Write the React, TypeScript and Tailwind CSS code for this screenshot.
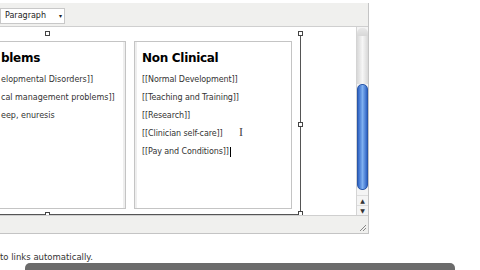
import React from "react"

const FONT = { fontFamily: '"DejaVu Sans", Verdana, sans-serif' }

const Handle = ({ className }: { className: string }) => (
    <span className={`absolute w-[5px] h-[5px] bg-white border border-[#444] ${className}`} />
)

const Scrollbar = () => (
    <div className="w-[12px] flex flex-col border-l border-[#d4d4d4] bg-[#f4f4f4]">
        {/* top cap */}
        <div className="h-[8px] bg-gradient-to-b from-[#e8e8e8] to-[#d8d8d8] rounded-t-[5px] mt-[1px]" />
        {/* track above thumb */}
        <div className="h-[48px] bg-gradient-to-r from-[#d8d8d8] via-[#f6f6f6] to-[#d8d8d8]" />
        {/* thumb */}
        <div className="h-[106px] rounded-[5px] bg-gradient-to-r from-[#2f63c4] via-[#7fb0f0] to-[#2f63c4] border border-[#2a57a8]" />
        <div className="flex-1" />
        <div className="h-[10px] flex items-center justify-center border-t border-[#ddd] text-[6px] text-[#333] leading-none">▲</div>
        <div className="h-[10px] flex items-center justify-center border-t border-[#ddd] text-[6px] text-[#333] leading-none">▼</div>
    </div>
)

export default function App() {
    return (
        <div className="w-[480px] h-[270px] bg-white overflow-hidden relative" style={FONT}>
            <div className="w-[369px] mt-[3px] flex flex-col border-r border-b border-[#c4c4c4]">
                {/* Toolbar */}
                <div className="h-[24px] bg-[#f0f0ee] border-b border-[#cfcfcf] flex items-center">
                    <div className="w-[65px] h-[16px] mt-[3px] bg-white border border-[#c8c8c8] flex items-center justify-between pl-[4px] pr-[2px]">
                        <span className="text-[8px] text-[#222]">Paragraph</span>
                        <span className="text-[6px] text-[#222] leading-none">▾</span>
                    </div>
                </div>

                {/* Editor */}
                <div className="h-[188px] flex">
                    <div className="flex-1 relative bg-white">
                        {/* table selection */}
                        <div className="absolute left-[-200px] top-[6px] w-[501px] h-[182px] border-r border-b border-[#555]" />
                        <Handle className="left-[45px] top-[4px]" />
                        <Handle className="left-[298px] top-[4px]" />
                        <Handle className="left-[298px] top-[95px]" />
                        <Handle className="left-[298px] top-[184px]" />
                        <Handle className="left-[45px] top-[185px]" />

                        <div className="flex gap-[8px] ml-[-10px] mt-[14px] h-[168px]">
                            {/* left cell */}
                            <div className="w-[136px] border border-[#c4c4c4] shadow-[inset_-2px_0_0_#eeeeee] pl-[10px]">
                                <div className="text-[12px] font-bold text-black mt-[10px] leading-none tracking-[-0.3px]">blems</div>
                                <div className="text-[8px] text-[#333] mt-[7px] leading-[18px]">
                                    <div>elopmental Disorders]]</div>
                                    <div>cal management problems]]</div>
                                    <div>eep, enuresis</div>
                                </div>
                            </div>
                            {/* right cell */}
                            <div className="w-[158px] border border-[#c4c4c4] shadow-[inset_2px_0_0_#eeeeee] pl-[7px] relative">
                                <div className="text-[12px] font-bold text-black mt-[10px] leading-none tracking-[-0.3px]">Non Clinical</div>
                                <div className="text-[8px] text-[#333] mt-[7px] leading-[18px] tracking-[-0.1px]">
                                    <div>[[Normal Development]]</div>
                                    <div>[[Teaching and Training]]</div>
                                    <div>[[Research]]</div>
                                    <div>[[Clinician self-care]]</div>
                                    <div className="flex items-center">
                                        [[Pay and Conditions]]
                                        <span className="inline-block w-px h-[10px] bg-black ml-[1px]" />
                                    </div>
                                </div>
                                {/* I-beam cursor */}
                                <span
                                    className="absolute left-[104px] top-[84px] text-[12px] text-[#444] leading-none"
                                    style={{ fontFamily: '"Liberation Serif", serif' }}
                                >
                                    I
                                </span>
                            </div>
                        </div>
                    </div>
                    <Scrollbar />
                </div>

                {/* Status bar */}
                <div className="h-[18px] bg-[#f0f0ee] border-t border-[#cfcfcf] relative">
                    <svg className="absolute right-[1px] bottom-[1px]" width="9" height="9" viewBox="0 0 9 9">
                        <path d="M8 2 L2 8 M8 5 L5 8" stroke="#888" strokeWidth="1" />
                    </svg>
                </div>
            </div>

            <div className="mt-[19px] text-[8.5px] text-[#333] leading-none">to links automatically.</div>

            <div className="absolute left-[25px] top-[263px] w-[430px] h-[10px] bg-[#6b6b6b] rounded-t-[5px]" />
        </div>
    )
}
